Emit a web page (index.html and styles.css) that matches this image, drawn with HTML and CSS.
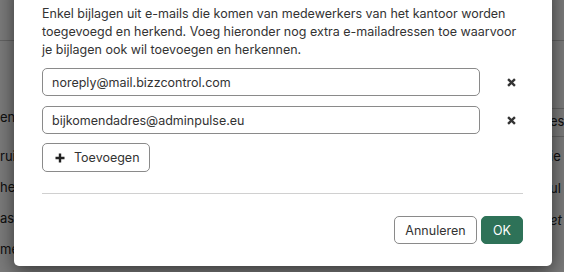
FILE: index.html
```html
<!DOCTYPE html>
<html lang="nl">
<head>
<meta charset="utf-8">
<link rel="stylesheet" href="styles.css">
</head>
<body>
<div class="page">
  <div class="page-left">
    <div class="pl-head"></div>
    <div class="pl-row pl-first">en</div>
    <div class="pl-row pl-second">ruil</div>
    <div class="pl-row">hen</div>
    <div class="pl-row">ast</div>
    <div class="pl-row">me</div>
  </div>
  <div class="page-mid"></div>
  <div class="page-right">
    <div class="pr-head"></div>
    <div class="pr-gap"></div>
    <div class="pr-row pr-bordered">es</div>
    <div class="pr-row">ie</div>
    <div class="pr-row">ul</div>
    <div class="pr-row pr-italic">et</div>
  </div>
</div>
<div class="backdrop"></div>
<div class="modal">
  <div class="modal-body">
    <p class="intro">Enkel bijlagen uit e-mails die komen van medewerkers van het kantoor worden toegevoegd en herkend. Voeg hieronder nog extra e-mailadressen toe waarvoor je bijlagen ook wil toevoegen en herkennen.</p>
    <div class="addr-row">
      <input class="addr-input" type="text" value="noreply@mail.bizzcontrol.com">
      <button class="remove-btn" type="button" aria-label="Verwijderen">
        <svg class="icon-times" viewBox="0 0 10 10" width="9" height="9"><path d="M1.2 1.2 L8.8 8.8 M8.8 1.2 L1.2 8.8" stroke="#333" stroke-width="2.6" stroke-linecap="butt" fill="none"/></svg>
      </button>
    </div>
    <div class="addr-row">
      <input class="addr-input" type="text" value="bijkomendadres@adminpulse.eu">
      <button class="remove-btn" type="button" aria-label="Verwijderen">
        <svg class="icon-times" viewBox="0 0 10 10" width="9" height="9"><path d="M1.2 1.2 L8.8 8.8 M8.8 1.2 L1.2 8.8" stroke="#333" stroke-width="2.6" stroke-linecap="butt" fill="none"/></svg>
      </button>
    </div>
    <button class="btn btn-add" type="button">
      <svg class="icon-plus" viewBox="0 0 10 10" width="10" height="10"><path d="M5 0.5 V9.5 M0.5 5 H9.5" stroke="#222" stroke-width="2.4" fill="none"/></svg>
      <span>Toevoegen</span>
    </button>
    <hr class="divider">
  </div>
  <div class="modal-footer">
    <button class="btn btn-cancel" type="button">Annuleren</button>
    <button class="btn btn-ok" type="button">OK</button>
  </div>
</div>
</body>
</html>
```
FILE: styles.css
```css
* { box-sizing: border-box; }
html, body {
  margin: 0;
  padding: 0;
  width: 564px;
  height: 272px;
  overflow: hidden;
}
body {
  font-family: Inter, "Liberation Sans", sans-serif;
  font-size: 12.5px;
  color: #333;
  background: #fff;
  position: relative;
}
.page {
  display: flex;
  height: 272px;
  color: #222;
  font-size: 13px;
}
.page-left {
  width: 40px;
}
.pl-head {
  height: 41px;
  border-bottom: 1px solid #ccc;
}
.pl-row {
  height: 31px;
  line-height: 16px;
  padding-top: 7px;
  white-space: nowrap;
}
.pl-first { margin-top: 61px; height: 39px; }
.page-mid { flex: 1; }
.page-right {
  width: 14px;
}
.pr-head {
  height: 41px;
  border-bottom: 1px solid #ccc;
}
.pr-gap {
  height: 68px;
  border-bottom: 1px solid #ccc;
}
.pr-row {
  height: 33px;
  line-height: 16px;
  padding-top: 10px;
  white-space: nowrap;
}
.pr-bordered {
  border-bottom: 1px solid #ccc;
  height: 28px;
  padding-top: 4px;
}
.pr-row + .pr-row { height: 32px; padding-top: 11px; }
.pr-italic { font-style: italic; }
.backdrop {
  position: absolute;
  inset: 0;
  background: rgba(0, 0, 0, 0.52);
}
.modal {
  position: absolute;
  left: 14px;
  top: -20px;
  width: 538px;
  background: #fff;
  border-radius: 5px;
  box-shadow: 0 5px 18px rgba(0, 0, 0, 0.55);
}
.modal-body {
  padding: 25px 29px 0 28px;
}
.intro {
  margin: 0 0 9px;
  line-height: 18px;
  color: #333;
}
.addr-row {
  display: flex;
  align-items: center;
  margin-bottom: 10px;
}
.addr-input {
  flex: 1;
  height: 28px;
  border: 1px solid #8a8a8a;
  border-radius: 5px;
  padding: 0 9px;
  font-family: inherit;
  font-size: 12.5px;
  color: #333;
  background: #fff;
  outline: none;
}
.remove-btn {
  width: 43px;
  height: 28px;
  border: 0;
  background: none;
  padding: 0 7px 0 0;
  display: flex;
  align-items: center;
  justify-content: flex-end;
}
.btn {
  font-family: inherit;
  font-size: 12.5px;
  border-radius: 5px;
  cursor: pointer;
}
.btn-add {
  margin-top: -1px;
  display: flex;
  align-items: center;
  gap: 9px;
  height: 29px;
  width: 108px;
  padding: 0 0 0 12px;
  border: 1px solid #8a8a8a;
  background: #fff;
  color: #333;
}
.icon-plus { display: block; }
.divider {
  margin: 21px 0 0;
  border: 0;
  border-top: 1px solid #d0d0d0;
}
.modal-footer {
  display: flex;
  justify-content: flex-end;
  gap: 4px;
  padding: 22px 29px 22px 28px;
}
.btn-cancel {
  width: 83px;
  height: 28px;
  border: 1px solid #8a8a8a;
  background: #fff;
  color: #333;
  padding: 0;
}
.btn-ok {
  width: 42px;
  height: 28px;
  border: 1px solid #2e7258;
  background: #2e7258;
  color: #fff;
  padding: 0;
}
```
